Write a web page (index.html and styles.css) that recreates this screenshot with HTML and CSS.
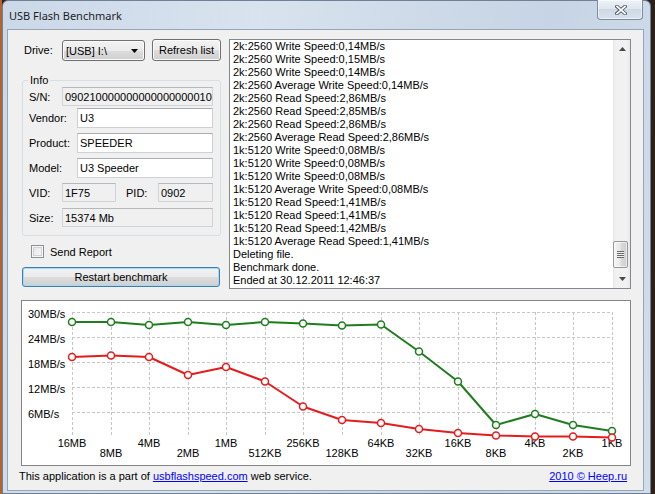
FILE: index.html
```html
<!DOCTYPE html>
<html>
<head>
<meta charset="utf-8">
<title>USB Flash Benchmark</title>
<link rel="stylesheet" href="styles.css">
</head>
<body>
<div class="window">
  <div class="titlebar">
    <span class="title">USB Flash Benchmark</span>
    <div class="close">
      <svg width="12" height="10" viewBox="0 0 12 10"><path d="M2 1.5 L10 8.5 M10 1.5 L2 8.5" stroke="#4b5666" stroke-width="3.6" stroke-linecap="square" fill="none"/><path d="M2 1.5 L10 8.5 M10 1.5 L2 8.5" stroke="#ffffff" stroke-width="1.7" stroke-linecap="square" fill="none"/></svg>
    </div>
  </div>
  <div class="client">
    <div class="top">
      <div class="left">
        <div class="drive-row">
          <span class="drive-label">Drive:</span>
          <div class="combo"><span>[USB] I:\</span><svg width="7" height="4" viewBox="0 0 7 4"><path d="M0 0 L7 0 L3.5 4 Z" fill="#000"/></svg></div>
          <div class="btn refresh">Refresh list</div>
        </div>
        <fieldset class="info">
          <legend>Info</legend>
          <div class="row r-sn"><span class="lbl lbl-s">S/N:</span><div class="field ro f-wide">0902100000000000000000104</div></div>
          <div class="row r-vendor"><span class="lbl lbl-l">Vendor:</span><div class="field f-mid">U3</div></div>
          <div class="row r-product"><span class="lbl lbl-l">Product:</span><div class="field f-mid">SPEEDER</div></div>
          <div class="row r-model"><span class="lbl lbl-l">Model:</span><div class="field f-mid">U3 Speeder</div></div>
          <div class="row r-vid"><span class="lbl lbl-s">VID:</span><div class="field ro f-vid">1F75</div><span class="lbl lbl-pid">PID:</span><div class="field ro f-pid">0902</div></div>
          <div class="row r-size"><span class="lbl lbl-s">Size:</span><div class="field ro f-wide">15374 Mb</div></div>
        </fieldset>
        <div class="check-row"><span class="checkbox"></span><span>Send Report</span></div>
        <div class="btn restart">Restart benchmark</div>
      </div>
      <div class="log">
        <div class="log-lines">
          <div>2k:2560 Write Speed:0,14MB/s</div>
          <div>2k:2560 Write Speed:0,15MB/s</div>
          <div>2k:2560 Write Speed:0,14MB/s</div>
          <div>2k:2560 Average Write Speed:0,14MB/s</div>
          <div>2k:2560 Read Speed:2,86MB/s</div>
          <div>2k:2560 Read Speed:2,85MB/s</div>
          <div>2k:2560 Read Speed:2,86MB/s</div>
          <div>2k:2560 Average Read Speed:2,86MB/s</div>
          <div>1k:5120 Write Speed:0,08MB/s</div>
          <div>1k:5120 Write Speed:0,08MB/s</div>
          <div>1k:5120 Write Speed:0,08MB/s</div>
          <div>1k:5120 Average Write Speed:0,08MB/s</div>
          <div>1k:5120 Read Speed:1,41MB/s</div>
          <div>1k:5120 Read Speed:1,41MB/s</div>
          <div>1k:5120 Read Speed:1,42MB/s</div>
          <div>1k:5120 Average Read Speed:1,41MB/s</div>
          <div>Deleting file.</div>
          <div>Benchmark done.</div>
          <div>Ended at 30.12.2011 12:46:37</div>
        </div>
        <div class="scrollbar">
          <div class="sb-btn"><svg width="7" height="4" viewBox="0 0 7 4"><path d="M0 4 L3.5 0 L7 4 Z" fill="#4a4a4a"/></svg></div>
          <div class="sb-track"><div class="sb-thumb"><span class="grip"></span></div></div>
          <div class="sb-btn sb-down"><svg width="7" height="4" viewBox="0 0 7 4"><path d="M0 0 L7 0 L3.5 4 Z" fill="#4a4a4a"/></svg></div>
        </div>
      </div>
    </div>
    <div class="chart">
      <svg width="608" height="164" viewBox="22 301 608 164">
        <path class="grid" d="M72.5 312V437M111.5 312V437M149.5 312V437M188.5 312V437M226.5 312V437M265.5 312V437M303.5 312V437M342.5 312V437M381.5 312V437M419.5 312V437M458.5 312V437M496.5 312V437M535.5 312V437M573.5 312V437M612.5 312V437M72 312.5H613M72 337.5H613M72 362.5H613M72 387.5H613M72 412.5H613"/>
        <text class="lab" x="28" y="318">30MB/s</text>
        <text class="lab" x="28" y="343">24MB/s</text>
        <text class="lab" x="28" y="368">18MB/s</text>
        <text class="lab" x="28" y="393">12MB/s</text>
        <text class="lab" x="28" y="418">6MB/s</text>
        <g class="xl">
          <text x="72" y="447">16MB</text>
          <text x="111" y="457">8MB</text>
          <text x="149" y="447">4MB</text>
          <text x="188" y="457">2MB</text>
          <text x="226" y="447">1MB</text>
          <text x="265" y="457">512KB</text>
          <text x="303" y="447">256KB</text>
          <text x="342" y="457">128KB</text>
          <text x="381" y="447">64KB</text>
          <text x="419" y="457">32KB</text>
          <text x="458" y="447">16KB</text>
          <text x="496" y="457">8KB</text>
          <text x="535" y="447">4KB</text>
          <text x="573" y="457">2KB</text>
          <text x="612" y="447">1KB</text>
        </g>
        <g class="series green">
          <polyline points="72,322 111,322 149,325 188,322 226,325 265,322 303,323.5 342,325.5 381,324.5 419,351.5 458,381.5 496,425 535,414 573,425 612,431"/>
          <circle cx="72" cy="322" r="3.5"/><circle cx="111" cy="322" r="3.5"/><circle cx="149" cy="325" r="3.5"/><circle cx="188" cy="322" r="3.5"/><circle cx="226" cy="325" r="3.5"/><circle cx="265" cy="322" r="3.5"/><circle cx="303" cy="323.5" r="3.5"/><circle cx="342" cy="325.5" r="3.5"/><circle cx="381" cy="324.5" r="3.5"/><circle cx="419" cy="351.5" r="3.5"/><circle cx="458" cy="381.5" r="3.5"/><circle cx="496" cy="425" r="3.5"/><circle cx="535" cy="414" r="3.5"/><circle cx="573" cy="425" r="3.5"/><circle cx="612" cy="431" r="3.5"/>
        </g>
        <g class="series red">
          <polyline points="72,357 111,355.5 149,357 188,375 226,367 265,381.5 303,406.5 342,420 381,423 419,429 458,433 496,435.5 535,436.5 573,436.5 612,437.5"/>
          <circle cx="72" cy="357" r="3.5"/><circle cx="111" cy="355.5" r="3.5"/><circle cx="149" cy="357" r="3.5"/><circle cx="188" cy="375" r="3.5"/><circle cx="226" cy="367" r="3.5"/><circle cx="265" cy="381.5" r="3.5"/><circle cx="303" cy="406.5" r="3.5"/><circle cx="342" cy="420" r="3.5"/><circle cx="381" cy="423" r="3.5"/><circle cx="419" cy="429" r="3.5"/><circle cx="458" cy="433" r="3.5"/><circle cx="496" cy="435.5" r="3.5"/><circle cx="535" cy="436.5" r="3.5"/><circle cx="573" cy="436.5" r="3.5"/><circle cx="612" cy="437.5" r="3.5"/>
        </g>
      </svg>
    </div>
    <div class="footer">
      <span>This application is a part of <a href="#" class="link">usbflashspeed.com</a> web service.</span>
      <a href="#" class="link">2010 © Heep.ru</a>
    </div>
  </div>
</div>
</body>
</html>
```
FILE: styles.css
```css
* { box-sizing: border-box; }
html, body { margin: 0; padding: 0; }
body {
  width: 655px;
  height: 494px;
  overflow: hidden;
  background: linear-gradient(90deg, #b4622e 0, #b4622e 2px, #2c2018 2px);
  font-family: "Liberation Sans", Arial, sans-serif;
  font-size: 11px;
  color: #000;
}
.window {
  margin-left: 2px;
  width: 649px;
  height: 494px;
  border: 1px solid #6f8197;
  border-radius: 6px 6px 0 0;
  background: linear-gradient(100deg, #cbd8e8 0%, #d9e3ef 35%, #cfdbe9 55%, #c6d4e5 75%, #d2ddea 100%);
  padding: 0 6px 2px 4px;
  display: flex;
  flex-direction: column;
}
.titlebar {
  height: 28px;
  flex: none;
  display: flex;
  justify-content: space-between;
  align-items: flex-start;
}
.title {
  font-family: "Noto Sans", "Open Sans", sans-serif;
  font-size: 11px;
  line-height: 16px;
  padding: 7px 0 0 2px;
  color: #1e1e1e;
}
.close {
  width: 46px;
  height: 20px;
  margin: -1px 1px 0 0;
  border: 1px solid #7c8ca0;
  border-top: none;
  border-radius: 0 0 4px 4px;
  background: linear-gradient(180deg, #eef2f7 0%, #dfe6ee 45%, #cfd9e5 50%, #d9e2ec 100%);
  box-shadow: inset 0 0 0 1px rgba(255,255,255,0.55);
  display: flex;
  align-items: center;
  justify-content: center;
  padding: 1px 0 0 2px;
}
.client {
  height: 462px;
  flex: none;
  border: 1px solid #97a5b5;
  background: #f0f0f0;
  padding: 9px 12px 0 13px;
  display: flex;
  flex-direction: column;
}
.top {
  display: flex;
  height: 250px;
  flex: none;
}
.left {
  width: 199px;
  margin-left: 1px;
  display: flex;
  flex-direction: column;
}
.drive-row {
  display: flex;
  height: 22px;
  align-items: center;
}
.drive-label {
  width: 40px;
  padding-left: 2px;
}
.combo {
  width: 83px;
  height: 21px;
  margin: 1px 7px 0 0;
  border: 1px solid #707070;
  border-radius: 3px;
  background: linear-gradient(180deg, #f2f2f2 0%, #ebebeb 50%, #dddddd 50%, #cfcfcf 100%);
  box-shadow: inset 0 0 0 1px #fbfbfb;
  display: flex;
  align-items: center;
  justify-content: space-between;
  padding: 0 6px 0 3px;
}
.btn {
  border: 1px solid #707070;
  border-radius: 3px;
  background: linear-gradient(180deg, #f2f2f2 0%, #ebebeb 50%, #dddddd 50%, #cfcfcf 100%);
  box-shadow: inset 0 0 0 1px #fbfbfb;
  display: flex;
  align-items: center;
  justify-content: center;
}
.refresh {
  width: 69px;
  height: 22px;
}
.restart {
  width: 198px;
  height: 20px;
  margin-top: 9px;
  border-color: #3c7fb1;
  box-shadow: inset 0 0 0 1px #a7d9f5;
}
fieldset.info {
  margin: 13px 0 0 0;
  padding: 0 7px 8px 6px;
  border: 1px solid #d5dfe5;
  border-radius: 3px;
  min-width: 0;
}
fieldset.info legend {
  padding: 0 2px;
  margin-left: -1px;
  line-height: 13px;
}
.row {
  display: flex;
  align-items: center;
}
.lbl { flex: none; }
.lbl-s { width: 33px; }
.lbl-l { width: 48px; }
.lbl-pid { width: 32px; margin-left: 10px; }
.r-sn { height: 19px; }
.r-vendor { height: 20px; margin-top: 2px; }
.r-product { height: 20px; margin-top: 5px; }
.r-model { height: 20px; margin-top: 5px; }
.r-vid { height: 19px; margin-top: 5px; }
.r-size { height: 19px; margin-top: 6px; }
.field {
  height: 100%;
  border: 1px solid #cdd1d6;
  border-top-color: #abadb3;
  background: #fff;
  padding: 0 2px;
  display: flex;
  align-items: center;
  white-space: nowrap;
  overflow: hidden;
}
.field.ro {
  background: #f0f0f0;
  border-color: #d0d3d7;
  border-top-color: #b5b8bd;
}
.f-wide { width: 151px; }
.f-mid { width: 136px; }
.f-vid { width: 54px; }
.f-pid { width: 55px; }
.check-row {
  display: flex;
  align-items: center;
  height: 13px;
  margin-top: 9px;
}
.checkbox {
  width: 13px;
  height: 13px;
  margin: 0 6px 0 9px;
  border: 1px solid #8e8f8f;
  background: linear-gradient(135deg, #e2e3e5, #fafafa);
  box-shadow: inset 0 0 0 1px #f6f6f6, inset 0 0 0 2px #cfd1d4;
}
.log {
  width: 402px;
  height: 250px;
  margin-left: 8px;
  border: 1px solid #828790;
  background: #fff;
  display: flex;
}
.log-lines {
  flex: 1;
  padding-left: 3px;
  line-height: 13px;
  white-space: nowrap;
  overflow: hidden;
}
.scrollbar {
  width: 17px;
  flex: none;
  display: flex;
  flex-direction: column;
  background: linear-gradient(90deg, #e3e3e3 0, #f1f1f1 2px, #f1f1f1 14px, #e8e8e8 100%);
}
.sb-btn {
  height: 17px;
  display: flex;
  align-items: center;
  justify-content: center;
  padding-left: 1px;
}
.sb-down { padding-bottom: 2px; }
.sb-track {
  flex: 1;
  display: flex;
  flex-direction: column;
  justify-content: flex-end;
  padding: 0 2px 3px 0;
}
.sb-thumb {
  height: 27px;
  border: 1px solid #979797;
  border-radius: 2px;
  background: linear-gradient(90deg, #f4f4f4 0%, #e9e9e9 45%, #dadada 55%, #cdcdcd 100%);
  box-shadow: inset 0 0 0 1px rgba(255,255,255,0.6);
  display: flex;
  align-items: center;
  justify-content: center;
}
.grip {
  width: 7px;
  height: 7px;
  background: repeating-linear-gradient(180deg, #6a6a6a 0, #6a6a6a 1px, #eeeeee 1px, #eeeeee 2px);
}
.chart {
  margin-top: 11px;
  height: 166px;
  flex: none;
  border: 1px solid #858585;
  background: #fff;
}
.chart svg { display: block; }
.grid {
  fill: none;
  stroke: #c6c6c6;
  stroke-width: 1;
  stroke-dasharray: 3 2;
}
.lab, .xl text {
  font-family: "Liberation Sans", Arial, sans-serif;
  font-size: 11px;
  fill: #000;
}
.xl text { text-anchor: middle; }
.series polyline {
  fill: none;
  stroke-width: 2;
  stroke-linejoin: round;
}
.series circle {
  fill: #fff;
  stroke-width: 1.5;
}
.green polyline, .green circle { stroke: #1f7d1f; }
.red polyline, .red circle { stroke: #e41c1c; }
.footer {
  margin: 4px 4px 0 -2px;
  display: flex;
  justify-content: space-between;
  line-height: 13px;
}
.link {
  color: #0000ff;
  text-decoration: underline;
}
```
